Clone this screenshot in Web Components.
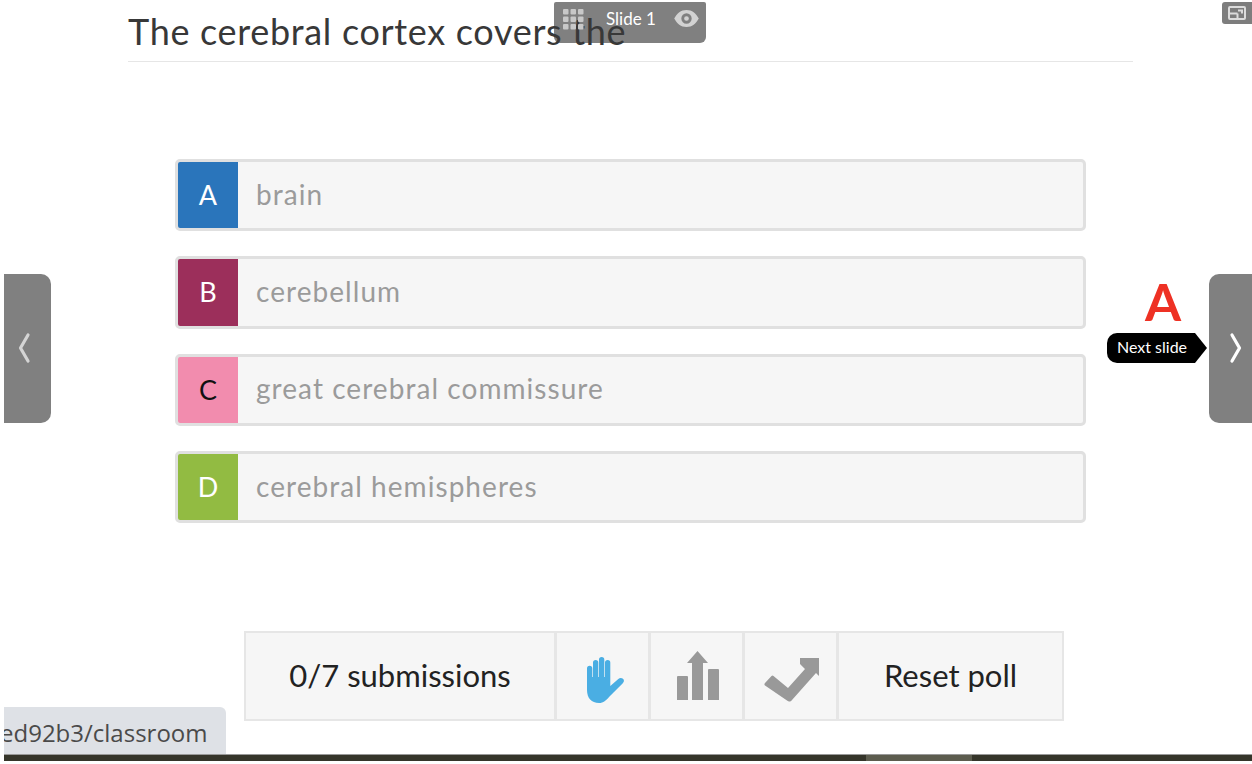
<!DOCTYPE html>
<html lang="en"><head><meta charset="utf-8"><title>Classroom</title>
<style>
html,body{margin:0;padding:0;background:#fff}
body{width:1252px;height:764px;overflow:hidden;position:relative;font-family:Lato,"Open Sans",sans-serif}
</style></head><body>
<quiz-slide>
  <quiz-title slot="title">The cerebral cortex covers the</quiz-title>
  <quiz-option letter="A" color="#2a75bb" fg="#fff">brain</quiz-option>
  <quiz-option letter="B" color="#9c2f5b" fg="#fff">cerebellum</quiz-option>
  <quiz-option letter="C" color="#f28cae" fg="#111">great cerebral commissure</quiz-option>
  <quiz-option letter="D" color="#92bb42" fg="#fff">cerebral hemispheres</quiz-option>
  <poll-toolbar slot="toolbar"></poll-toolbar>
</quiz-slide>
<slide-pill></slide-pill>
<corner-button></corner-button>
<side-nav dir="prev"></side-nav>
<side-nav dir="next"></side-nav>
<next-tip></next-tip>
<status-url>ed92b3/classroom</status-url>
<task-bar></task-bar>
<script>
function def(name, html, extra){
  const t=document.createElement('template');t.innerHTML=html;
  customElements.define(name,class extends HTMLElement{
    constructor(){super();this.attachShadow({mode:'open'}).appendChild(t.content.cloneNode(true));}
    connectedCallback(){if(extra)extra.call(this);}
  });
}
def('quiz-slide',`<style>
:host{display:block;height:754px}
.head{margin:0 119px 0 128px}
.opts{display:flex;flex-direction:column;gap:25px;margin:97px 0 0 175px;width:911px}
.bar{display:flex;margin:107.67px 0 0 244px}
</style><div class="head"><slot name="title"></slot></div><div class="opts"><slot></slot></div><div class="bar"><slot name="toolbar"></slot></div>`);
def('quiz-title',`<style>
:host{display:block;position:relative;z-index:1;height:61px;border-bottom:1px solid #e6e6e6;font-size:36px;line-height:62px;color:#383838;letter-spacing:.68px;white-space:nowrap}
</style><slot></slot>`);
def('quiz-option',`<style>
:host{display:flex;height:72.33px;box-sizing:border-box;border:3px solid #e0e0e0;border-radius:5px;background:#f6f6f6;overflow:hidden;font-size:28px;color:#9b9b9b}
.l{width:60px;display:flex;align-items:center;justify-content:center;font-size:27px;flex:none;padding-bottom:1px;box-sizing:border-box}
.t{padding:0 0 3px 18px;display:flex;align-items:center;letter-spacing:1.05px;white-space:nowrap}
</style><div class="l"></div><div class="t"><slot></slot></div>`,function(){
  const l=this.shadowRoot.querySelector('.l');l.textContent=this.getAttribute('letter');
  l.style.background=this.getAttribute('color');l.style.color=this.getAttribute('fg');
});
def('poll-toolbar',`<style>
:host{display:flex;height:90px;box-sizing:border-box;border:2px solid #e6e6e6;background:#f6f6f6;color:#222;font-size:31px}
div{display:flex;align-items:center;justify-content:center;border-right:3px solid #e6e6e6;box-sizing:border-box;white-space:nowrap}
div:last-child{border-right:0}
.s{width:311px;padding-bottom:2px}.i{width:94px}.r{width:223px;padding-bottom:2px}
svg{display:block}
.hand{margin:8px 0 0 8px}.bars{margin-left:2px}.chk{margin:8px 0 0 1px}
</style>
<div class="s">0/7 submissions</div>
<div class="i"><svg class="hand" width="39" height="46" viewBox="0 0 39 46"><path fill="#4aaee3" d="M0 11.500a2.650 2.650 0 0 1 5.300 0V20H6V5.600a2.650 2.650 0 0 1 5.300 0V20H12V2.650a2.650 2.650 0 0 1 5.300 0V20H18V5.600a2.650 2.650 0 0 1 5.300 0V29l8-7c1.500-1.300 3.300-1.300 4.700-.2 1.400 1.300 1.200 3-.2 4.400L22.500 39.500C19 43.500 16.500 46 12 46 4.500 46 0 41 0 33Z"/></svg></div>
<div class="i"><svg class="bars" width="42" height="49" viewBox="0 0 42 49"><path fill="#999" d="M1 25h9a1 1 0 0 1 1 1v23H0V26a1 1 0 0 1 1-1ZM32 18h9a1 1 0 0 1 1 1v30H31V19a1 1 0 0 1 1-1ZM15 49V12h-5L20.500 0 31 12h-5v37Z"/></svg></div>
<div class="i"><svg class="chk" width="55" height="44" viewBox="0 0 55 44"><path fill="#999" d="M1 25l6.500-7a1.500 1.500 0 0 1 2 0L24 30 41 11l-5-5V0h19v18l-3-3L28 42c-1.500 2-3.500 2-5 .5L1 27.500a1.800 1.800 0 0 1 0-2.500Z"/></svg></div>
<div class="r">Reset poll</div>`);
def('slide-pill',`<style>
:host{position:absolute;left:554px;top:2px;width:152px;height:41px;background:#808080;border-radius:2px 2px 6px 6px;color:#fff;font-size:17px;display:flex;align-items:center;box-sizing:border-box;padding:0 7px 7px 9px}
svg,span{position:relative;z-index:2}
svg{display:block;flex:none}
span{margin:0 0 2px 22px;flex:1;white-space:nowrap}
.eye{margin-bottom:2px}
</style>
<svg width="21" height="21" viewBox="0 0 21 21" fill="#c8c8c8"><rect x="0" y="0" width="5.500" height="5.500" rx="1"/><rect x="7.500" y="0" width="5.500" height="5.500" rx="1"/><rect x="15" y="0" width="5.500" height="5.500" rx="1"/><rect x="0" y="7.500" width="5.500" height="5.500" rx="1"/><rect x="7.500" y="7.500" width="5.500" height="5.500" rx="1"/><rect x="15" y="7.500" width="5.500" height="5.500" rx="1"/><rect x="0" y="15" width="5.500" height="5.500" rx="1"/><rect x="7.500" y="15" width="5.500" height="5.500" rx="1"/><rect x="15" y="15" width="5.500" height="5.500" rx="1"/></svg>
<span>Slide 1</span>
<svg class="eye" width="25" height="17" viewBox="0 0 26 18"><path fill="#d2d2d2" fill-rule="evenodd" d="M13 0C7 0 3 3.500 0 9c3 5.500 7 9 13 9s10-3.500 13-9c-3-5.500-7-9-13-9Zm0 3.500a5.500 5.500 0 1 1 0 11 5.500 5.500 0 0 1 0-11Zm0 3a2.500 2.500 0 1 0 0 5 2.500 2.500 0 0 0 0-5Z"/></svg>`);
def('corner-button',`<style>
:host{position:absolute;left:1222px;top:2px;width:30px;height:22px;background:#7d7d7d;border-radius:3px 0 0 3px;display:flex;align-items:center;justify-content:center}
svg{display:block}
</style><svg width="18" height="14" viewBox="0 0 18 14" fill="none" stroke="#dcdcdc" stroke-width="2"><rect x="1" y="1" width="16" height="12" rx="1"/><path d="M1 7.500h8.500M9.500 13V7.500M10 4.500h4v3"/></svg>`);
def('side-nav',`<style>
:host{position:absolute;top:274px;height:149px;box-sizing:border-box;background:#808080;display:flex;align-items:center;justify-content:center;padding-bottom:2px}
svg{display:block}
</style><svg width="14" height="32" viewBox="0 0 14 32" fill="none" stroke-width="3.200" stroke-linecap="round" stroke-linejoin="round"><path/></svg>`,function(){
  const next=this.getAttribute('dir')==='next';
  Object.assign(this.style,next?{left:'1209px',width:'43px',borderRadius:'10px 0 0 10px',paddingLeft:'10px'}:{left:'4px',width:'47px',borderRadius:'0 10px 10px 0',paddingRight:'7px'});
  const p=this.shadowRoot.querySelector('path');
  p.setAttribute('d',next?'M3 3l7.500 13L3 29':'M11 3L3.500 16 11 29');
  p.setAttribute('stroke',next?'#fff':'#d4d4d4');
});
def('next-tip',`<style>
:host{position:absolute;left:1107px;top:282px;display:flex;flex-direction:column;align-items:center;width:100px}
.a{color:#ee3124;font-size:52px;font-weight:700;line-height:1;height:38px;margin:0 0 13px 12px;display:flex;align-items:center}
.t{width:100px;height:30px;box-sizing:border-box;background:#000;color:#fff;font-size:16px;line-height:28px;padding-left:10px;white-space:nowrap;border-radius:10px 0 0 10px;clip-path:polygon(0 0,88% 0,100% 50%,88% 100%,0 100%)}
</style><div class="a">A</div><div class="t">Next slide</div>`);
def('status-url',`<style>
:host{position:absolute;left:4px;top:707px;width:222px;height:47px;box-sizing:border-box;background:#dee1e6;border-radius:0 6px 0 0;overflow:hidden;color:#4a4a4a;font-family:"Open Sans",sans-serif;font-size:24px;line-height:51px;white-space:nowrap;text-indent:-4px}
</style><slot></slot>`);
def('task-bar',`<style>
:host{position:absolute;left:4px;right:0;top:754px;height:7px;background:#35352a;border-top:1px solid #999;box-sizing:border-box;display:flex}
i{position:absolute;left:862px;width:106px;top:0;bottom:0;background:#5c5c4e}
</style><i></i>`);
</script>
</body></html>
